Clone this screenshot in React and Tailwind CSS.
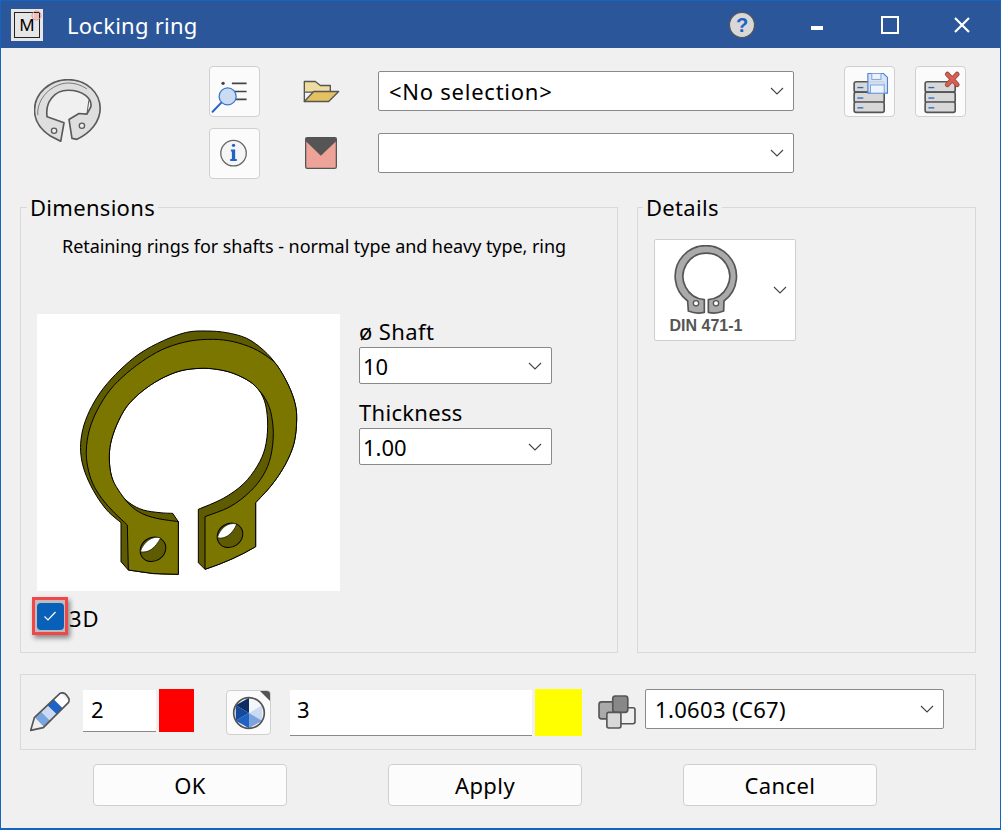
import React from "react";

// catmull-rom through the points, starts from the first one
function run(pts) {
    let d = "";
    for (let i = 0; i < pts.length - 1; i++) {
        const p0 = pts[i - 1] || pts[i];
        const p1 = pts[i];
        const p2 = pts[i + 1];
        const p3 = pts[i + 2] || p2;
        const c1 = [p1[0] + (p2[0] - p0[0]) / 6, p1[1] + (p2[1] - p0[1]) / 6];
        const c2 = [p2[0] - (p3[0] - p1[0]) / 6, p2[1] - (p3[1] - p1[1]) / 6];
        d += ` C${c1[0]},${c1[1]} ${c2[0]},${c2[1]} ${p2[0]},${p2[1]}`;
    }
    return d;
}

const rightOuter = [[805,255],[825,310],[830,360],[822,430],[795,495],[755,555],[707,608]];
const backOuter = [[303,668],[262,632],[228,585],[200,530],[185,480],[182,430],[192,375],[215,320],[250,265],[300,210],[360,160],[430,122],[500,97],[560,93],[620,98],[680,115],[730,150],[770,195],...rightOuter];
const frontOuter = [[322,675],[280,635],[245,595],[218,550],[203,500],[199,450],[208,390],[232,330],[270,270],[320,220],[380,175],[440,143],[510,123],[580,118],[640,125],[700,145],[745,172],[772,197],...rightOuter];
const holeBack = [[535,628],[610,595],[670,552],[712,498],[735,445],[743,380],[737,315],[718,272],[690,245],[640,220],[590,208],[540,205],[480,213],[420,238],[365,275],[320,320],[290,375],[272,430],[268,480],[275,530],[295,575],[330,610],[370,630],[420,638],[458,640]];
const frontInner = [[555,650],[630,620],[690,575],[730,525],[752,470],[760,400],[752,335],[735,295],[718,272],[690,245],[640,220],[590,208],[540,205],[480,213],[420,238],[365,275],[320,320],[290,375],[272,430],[268,480],[275,530],[295,570],[330,615],[365,640],[410,655],[475,665]];

const backPath = `M303,668${run(backOuter)} L707,740 Q640,780 555,808 L535,788 L535,628${run(holeBack)} L475,665 L475,823 Q400,825 325,810 L303,785 Z`;
const frontPath = `M322,675${run(frontOuter)} L707,740 Q640,780 555,808 L555,650${run(frontInner)} L475,823 Q400,825 325,810 Z`;

function Chevron({ className = "" }) {
    return (
        <svg width="14" height="8" viewBox="0 0 14 8" className={className}>
            <polyline points="1,1 7,7 13,1" fill="none" stroke="#444" strokeWidth="1.1" />
        </svg>
    );
}

function Select({ value, className = "", textClass = "" }) {
    return (
        <div className={`flex items-center justify-between bg-white border border-[#8a8a8a] rounded-[2px] pr-[9px] text-[22px] text-black ${className}`}>
            <span className={textClass}>{value}</span>
            <Chevron />
        </div>
    );
}

function IconButton({ children, className = "" }) {
    return (
        <button className={`flex items-center justify-center bg-[#fbfbfb] border border-[#d0d0d0] rounded-[4px] ${className}`}>
            {children}
        </button>
    );
}

function DialogButton({ label }) {
    return (
        <button className="w-[194px] h-[42px] bg-[#fcfcfc] border border-[#cfcfcf] rounded-[4px] text-[22px] tracking-[0.4px] text-black">
            {label}
        </button>
    );
}

function DbStack({ children }) {
    return (
        <svg width="49" height="49" viewBox="0 0 150 150">
            {[45, 77, 107].map((y) => (
                <g key={y}>
                    <rect x="28" y={y} width="92" height="32" rx="6" fill="#d8d8d8" stroke="#555" strokeWidth="5" />
                    <line x1="38" x2="56" y1={y + 18} y2={y + 18} stroke="#2a66c4" strokeWidth="4" />
                </g>
            ))}
            {children}
        </svg>
    );
}

function RingDrawing() {
    return (
        <svg width="303" height="277" viewBox="51 42 909 831">
            <path d={backPath} fill="#5f5b00" stroke="#000" strokeWidth="3" strokeLinejoin="round" />
            <path d={frontPath} fill="#7b7600" stroke="#000" strokeWidth="3" strokeLinejoin="round" />
            <ellipse cx="399" cy="748" rx="40" ry="35" transform="rotate(-35 399 748)" fill="#5f5b00" stroke="#000" strokeWidth="3" />
            <path d="M361,755 C370,725 400,705 422,714 C405,745 385,760 361,755 Z" fill="#fff" stroke="#000" strokeWidth="2" />
            <ellipse cx="630" cy="706" rx="40" ry="35" transform="rotate(-35 630 706)" fill="#5f5b00" stroke="#000" strokeWidth="3" />
            <path d="M592,713 C600,685 625,665 650,672 C640,700 615,720 592,713 Z" fill="#fff" stroke="#000" strokeWidth="2" />
        </svg>
    );
}

export default function App() {
    return (
        <div className="w-[1001px] h-[830px] flex flex-col bg-[#f0f0f0] border border-[#1464c4] border-b-2 font-['Noto_Sans',sans-serif] text-black overflow-hidden">
            {/* title bar */}
            <div className="h-[47px] shrink-0 flex items-center bg-[#2b579a] text-white">
                <div className="relative ml-[10px] w-[32px] h-[32px] bg-[#e6e6e6] flex items-center justify-center">
                    <div className="w-[26px] h-[26px] border border-[#222] flex items-center justify-center text-black text-[17px] leading-none">M</div>
                    <svg width="11" height="11" viewBox="0 0 11 11" className="absolute top-[1px] right-[1px]">
                        <circle cx="5.5" cy="5.5" r="4.5" fill="none" stroke="#ee8a80" />
                        <path d="M3 4h5M3 6h5M3 8h5" stroke="#ee8a80" strokeWidth="0.8" />
                    </svg>
                </div>
                <span className="ml-[24px] mt-[1px] text-[22px] tracking-[0.25px]">Locking ring</span>
                <svg width="28" height="28" viewBox="0 0 28 28" className="ml-[530px]">
                    <circle cx="14" cy="14" r="12.5" fill="#d8d8d8" stroke="#555" strokeWidth="1.2" />
                    <text x="14" y="21" textAnchor="middle" fontSize="20" fontWeight="700" fontFamily="Liberation Sans" fill="#1f62c4">?</text>
                </svg>
                <div className="ml-[55px] mt-[7px] w-[12px] h-[4px] bg-white" />
                <div className="ml-[58px] w-[18px] h-[18px] border-2 border-white" />
                <svg width="16" height="16" viewBox="0 0 16 16" className="ml-[55px]">
                    <path d="M1 1 L15 15 M15 1 L1 15" stroke="#fff" strokeWidth="2.2" />
                </svg>
            </div>

            {/* toolbar */}
            <div className="h-[147px] shrink-0 flex items-start pt-[18px]">
                <svg width="67" height="63" viewBox="103 236 201 190" className="ml-[33px] mt-[13px]">
                    <path d="M183 424 L152 408 C125 390 104 365 104 330 C104 280 150 238 205 238 C262 238 302 278 302 325 C302 365 272 398 232 418 L217 415 L208 358 L238 340 L262 342 L274 320 C278 295 250 270 205 270 C165 270 135 305 142 350 L193 368 Z" fill="#dedede" stroke="#5a5a5a" strokeWidth="5" strokeLinejoin="round" />
                    <path d="M114 345 C110 295 155 250 205 248 C225 248 245 254 262 266" fill="none" stroke="#777" strokeWidth="3" />
                    <path d="M262 342 L268 300" fill="none" stroke="#5a5a5a" strokeWidth="3" />
                    <circle cx="163" cy="392" r="8" fill="#eee" stroke="#5a5a5a" strokeWidth="4" />
                    <circle cx="247" cy="377" r="8" fill="#eee" stroke="#5a5a5a" strokeWidth="4" />
                </svg>
                <div className="ml-[108px] flex flex-col gap-[11px]">
                    <IconButton className="w-[51px] h-[51px]">
                        <svg width="49" height="49" viewBox="0 0 150 150">
                            <circle cx="40" cy="50" r="5" fill="#444" />
                            <path d="M67 50H112M75 75H112M75 99H112" stroke="#444" strokeWidth="5" />
                            <circle cx="54" cy="90" r="26" fill="#cbdcf2" stroke="#3c78d0" strokeWidth="4" />
                            <line x1="34" y1="110" x2="8" y2="137" stroke="#2464c8" strokeWidth="6" strokeLinecap="round" />
                        </svg>
                    </IconButton>
                    <IconButton className="w-[51px] h-[51px]">
                        <svg width="49" height="49" viewBox="0 0 150 150">
                            <circle cx="72" cy="74" r="39" fill="#f5f5f5" stroke="#666" strokeWidth="4" />
                            <circle cx="72" cy="50" r="5" fill="#1f62c4" />
                            <path d="M64 63H77V92H82V98H62V92H67V69H64Z" fill="#1f62c4" />
                        </svg>
                    </IconButton>
                </div>
                <div className="ml-[43px] mt-[5px] flex flex-col gap-[22px]">
                    <div className="h-[40px] flex items-center">
                        <svg width="37" height="23" viewBox="908 236 111 68">
                            <path d="M912 300V240H945L960 252H990V272H912Z" fill="#efdca0" stroke="#555" strokeWidth="4" strokeLinejoin="round" />
                            <path d="M912 300L940 270H1015L985 300Z" fill="#e3c060" stroke="#555" strokeWidth="4" strokeLinejoin="round" />
                        </svg>
                    </div>
                    <div className="h-[40px] flex items-center pl-[2px] pb-[1px]">
                        <svg width="32" height="32" viewBox="0 0 99 99">
                            <rect x="2" y="2" width="95" height="95" rx="5" fill="#eda398" stroke="#555" strokeWidth="4" />
                            <path d="M2 2H97V12L49 58L2 12Z" fill="#555" />
                        </svg>
                    </div>
                </div>
                <div className="ml-[38px] mt-[5px] flex flex-col gap-[22px]">
                    <Select value="<No selection>" className="w-[416px] h-[40px] pl-[10px]" textClass="tracking-[0.75px]" />
                    <Select value="" className="w-[416px] h-[40px] pl-[10px]" />
                </div>
                <IconButton className="ml-[50px] w-[51px] h-[51px]">
                    <DbStack>
                        <path d="M70 20H118L130 32V80H70Z" fill="#d5e1f3" fillOpacity="0.9" stroke="#4b83d9" strokeWidth="3.5" strokeLinejoin="round" />
                        <rect x="82" y="20" width="28" height="18" fill="#eef3fb" stroke="#7ba4de" strokeWidth="3" />
                        <rect x="78" y="55" width="42" height="25" fill="#eef3fb" stroke="#7ba4de" strokeWidth="3" />
                    </DbStack>
                </IconButton>
                <IconButton className="ml-[20px] w-[51px] h-[51px]">
                    <DbStack>
                        <path d="M96 22L126 54M126 22L96 54" stroke="#8c4a40" strokeWidth="15" strokeLinecap="round" />
                        <path d="M96 22L126 54M126 22L96 54" stroke="#da5f4e" strokeWidth="10" strokeLinecap="round" />
                    </DbStack>
                </IconButton>
            </div>

            {/* group boxes */}
            <div className="h-[458px] shrink-0 flex gap-[19px] ml-[19px]">
                <fieldset className="w-[598px] h-full border border-[#d9d9d9]">
                    <legend className="ml-[6px] px-[3px] text-[22px] leading-[24px] tracking-[0.3px]">Dimensions</legend>
                    <div className="mt-[15px] pl-[41px] text-[18px] leading-[24px] tracking-[-0.06px] whitespace-nowrap">
                        Retaining rings for shafts - normal type and heavy type, ring
                    </div>
                    <div className="mt-[56px] ml-[16px] flex items-start">
                        <div className="w-[303px] h-[277px] bg-white">
                            <RingDrawing />
                        </div>
                        <div className="ml-[19px] w-[193px] pt-[5px] flex flex-col">
                            <span className="text-[22px] leading-[24px] tracking-[0.4px] mb-[4px]">ø Shaft</span>
                            <Select value="10" className="w-[193px] h-[37px] pl-[3px]" textClass="mt-[2px]" />
                            <span className="mt-[16px] text-[22px] leading-[24px] tracking-[0.3px] mb-[4px]">Thickness</span>
                            <Select value="1.00" className="w-[193px] h-[37px] pl-[3px]" textClass="mt-[2px]" />
                        </div>
                    </div>
                    <div className="mt-[6px] ml-[11px] flex items-center">
                        <div className="w-[36px] h-[38px] border-[3px] border-[#f04848] bg-[#bdbdbd] shadow-[2px_3px_5px_rgba(0,0,0,0.45)] flex items-center justify-center">
                            <div className="w-[27px] h-[27px] rounded-[4px] bg-[#0860b8] flex items-center justify-center">
                                <svg width="14" height="12" viewBox="0 0 14 12">
                                    <polyline points="1.5,6.5 5,10 12.5,2" fill="none" stroke="#fff" strokeWidth="1.2" />
                                </svg>
                            </div>
                        </div>
                        <span className="ml-[1px] mt-[4px] text-[22px] leading-none tracking-[0.8px]">3D</span>
                    </div>
                </fieldset>
                <fieldset className="w-[339px] h-full border border-[#d9d9d9]">
                    <legend className="ml-[5px] px-[3px] text-[22px] leading-[24px] tracking-[0.3px]">Details</legend>
                    <div className="mt-[20px] ml-[16px] w-[142px] h-[102px] bg-white border border-[#cfcfcf] rounded-[2px] flex items-center">
                        <div className="ml-[14px] w-[74px] flex flex-col items-center">
                            <svg width="64" height="69" viewBox="130 160 190 207">
                                <path d="M170 328 L172 358 Q195 368 220 362 L220 324 A70 70 0 1 1 232 324 L232 362 Q255 368 278 358 L279 328 A92 92 0 1 0 170 328 Z" fill="#aaa" stroke="#555" strokeWidth="5" strokeLinejoin="round" />
                                <circle cx="195" cy="335" r="8" fill="#fff" stroke="#555" strokeWidth="4" />
                                <circle cx="255" cy="335" r="8" fill="#fff" stroke="#555" strokeWidth="4" />
                            </svg>
                            <span className="mt-[3px] text-[16px] leading-[18px] font-bold text-[#555] whitespace-nowrap font-['Liberation_Sans',sans-serif]">DIN 471-1</span>
                        </div>
                        <Chevron className="ml-[30px]" />
                    </div>
                </fieldset>
            </div>

            {/* line, colour and material */}
            <div className="mt-[21px] ml-[19px] w-[956px] h-[76px] shrink-0 border border-[#d9d9d9] flex items-start">
                <svg width="40" height="40" viewBox="90 98 120 120" className="ml-[9px] mt-[17px]">
                    <path d="M105 175L180 102L207 128L132 203Z" fill="#fff" />
                    <path d="M105 175L124 157L151 184L132 203Z" fill="#7ba4de" />
                    <path d="M124 157L142 138L170 165L151 184Z" fill="#c9daf2" />
                    <path d="M142 138L161 120L188 147L170 165Z" fill="#1f63c6" />
                    <path d="M92 213L103 175L180 102Q192 97 200 108L207 118Q208 126 205 130L130 205Z" fill="none" stroke="#555" strokeWidth="5" strokeLinejoin="round" />
                </svg>
                <div className="ml-[13px] mt-[15px] w-[73px] h-[42px] bg-white border-b border-[#8a8a8a] pl-[8px] text-[22px] leading-[38px]">2</div>
                <div className="ml-[3px] mt-[14px] w-[35px] h-[43px] bg-[#ff0000]" />
                <IconButton className="relative ml-[32px] mt-[15px] w-[45px] h-[45px] overflow-hidden">
                    <svg width="34" height="34" viewBox="-50 -50 100 100">
                        <path d="M0 0L0 -45L-39 -22.5Z" fill="#0f2d63" />
                        <path d="M0 0L0 -45L39 -22.5Z" fill="#f3f6fb" />
                        <path d="M0 0L39 -22.5L39 22.5Z" fill="#c9daf2" />
                        <path d="M0 0L39 22.5L0 45Z" fill="#7ba4de" />
                        <path d="M0 0L0 45L-39 22.5Z" fill="#1f62c4" />
                        <path d="M0 0L-39 22.5L-39 -22.5Z" fill="#134a9c" />
                        <circle r="45" fill="none" stroke="#555" strokeWidth="5" />
                    </svg>
                    <span className="absolute top-0 right-0 w-0 h-0 border-t-[10px] border-l-[10px] border-t-[#555] border-l-transparent" />
                </IconButton>
                <div className="ml-[19px] mt-[15px] w-[242px] h-[46px] bg-white border-b border-[#8a8a8a] pl-[7px] text-[22px] leading-[38px]">3</div>
                <div className="ml-[3px] mt-[14px] w-[47px] h-[47px] bg-[#ffff00]" />
                <svg width="38" height="34" viewBox="233 104 116 104" className="ml-[16px] mt-[20px]">
                    <rect x="236" y="125" width="68" height="52" rx="8" fill="#aaa" stroke="#555" strokeWidth="5" />
                    <rect x="300" y="143" width="46" height="49" rx="6" fill="#efefef" stroke="#555" strokeWidth="5" />
                    <rect x="278" y="107" width="46" height="50" rx="8" fill="#888" stroke="#555" strokeWidth="5" />
                    <rect x="260" y="157" width="43" height="48" rx="6" fill="#d8d8d8" stroke="#555" strokeWidth="5" />
                </svg>
                <Select value="1.0603 (C67)" className="ml-[9px] mt-[14px] w-[299px] h-[40px] pl-[9px]" textClass="tracking-[0.35px]" />
            </div>

            {/* dialog buttons */}
            <div className="mt-[14px] ml-[92px] flex gap-[101px]">
                <DialogButton label="OK" />
                <DialogButton label="Apply" />
                <DialogButton label="Cancel" />
            </div>
        </div>
    );
}
